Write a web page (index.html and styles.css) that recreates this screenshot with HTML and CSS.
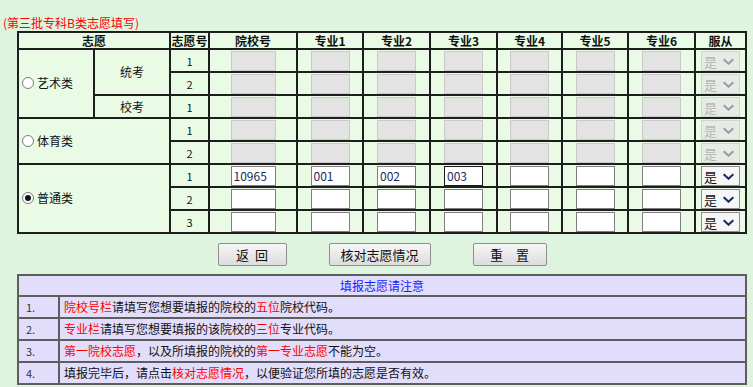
FILE: index.html
```html
<!DOCTYPE html>
<html lang="zh-CN">
<head>
	<meta charset="UTF-8">
	<title>志愿填写</title>
	<link rel="stylesheet" href="styles.css">
</head>
<body>
	<p class="title">(第三批专科B类志愿填写)</p>
	<table class="wish">
		<colgroup>
			<col style="width:76px"><col style="width:76px"><col style="width:39px"><col style="width:88px">
			<col style="width:66px"><col style="width:67px"><col style="width:67px"><col style="width:65px">
			<col style="width:66px"><col style="width:67px"><col style="width:51px">
		</colgroup>
		<thead>
			<tr>
				<th colspan="2">志愿</th>
				<th>志愿号</th>
				<th>院校号</th>
				<th>专业1</th>
				<th>专业2</th>
				<th>专业3</th>
				<th>专业4</th>
				<th>专业5</th>
				<th>专业6</th>
				<th>服从</th>
			</tr>
		</thead>
		<tbody>
			<tr>
				<td rowspan="3" class="kind"><label><input type="radio" name="kind" class="radio">艺术类</label></td>
				<td rowspan="2">统考</td>
				<td class="no">1</td>
				<td><input class="school" type="text" disabled></td>
				<td><input class="major" type="text" disabled></td>
				<td><input class="major" type="text" disabled></td>
				<td><input class="major" type="text" disabled></td>
				<td><input class="major" type="text" disabled></td>
				<td><input class="major" type="text" disabled></td>
				<td><input class="major" type="text" disabled></td>
				<td><div class="pick is-off"><select disabled><option>是</option><option>否</option></select><svg viewBox="0 0 14 8"><path d="M1.5 1.5 7 6.5 12.5 1.5"/></svg></div></td>
			</tr>
			<tr>
				<td class="no">2</td>
				<td><input class="school" type="text" disabled></td>
				<td><input class="major" type="text" disabled></td>
				<td><input class="major" type="text" disabled></td>
				<td><input class="major" type="text" disabled></td>
				<td><input class="major" type="text" disabled></td>
				<td><input class="major" type="text" disabled></td>
				<td><input class="major" type="text" disabled></td>
				<td><div class="pick is-off"><select disabled><option>是</option><option>否</option></select><svg viewBox="0 0 14 8"><path d="M1.5 1.5 7 6.5 12.5 1.5"/></svg></div></td>
			</tr>
			<tr>
				<td>校考</td>
				<td class="no">1</td>
				<td><input class="school" type="text" disabled></td>
				<td><input class="major" type="text" disabled></td>
				<td><input class="major" type="text" disabled></td>
				<td><input class="major" type="text" disabled></td>
				<td><input class="major" type="text" disabled></td>
				<td><input class="major" type="text" disabled></td>
				<td><input class="major" type="text" disabled></td>
				<td><div class="pick is-off"><select disabled><option>是</option><option>否</option></select><svg viewBox="0 0 14 8"><path d="M1.5 1.5 7 6.5 12.5 1.5"/></svg></div></td>
			</tr>
			<tr>
				<td rowspan="2" colspan="2" class="kind"><label><input type="radio" name="kind" class="radio">体育类</label></td>
				<td class="no">1</td>
				<td><input class="school" type="text" disabled></td>
				<td><input class="major" type="text" disabled></td>
				<td><input class="major" type="text" disabled></td>
				<td><input class="major" type="text" disabled></td>
				<td><input class="major" type="text" disabled></td>
				<td><input class="major" type="text" disabled></td>
				<td><input class="major" type="text" disabled></td>
				<td><div class="pick is-off"><select disabled><option>是</option><option>否</option></select><svg viewBox="0 0 14 8"><path d="M1.5 1.5 7 6.5 12.5 1.5"/></svg></div></td>
			</tr>
			<tr>
				<td class="no">2</td>
				<td><input class="school" type="text" disabled></td>
				<td><input class="major" type="text" disabled></td>
				<td><input class="major" type="text" disabled></td>
				<td><input class="major" type="text" disabled></td>
				<td><input class="major" type="text" disabled></td>
				<td><input class="major" type="text" disabled></td>
				<td><input class="major" type="text" disabled></td>
				<td><div class="pick is-off"><select disabled><option>是</option><option>否</option></select><svg viewBox="0 0 14 8"><path d="M1.5 1.5 7 6.5 12.5 1.5"/></svg></div></td>
			</tr>
			<tr>
				<td rowspan="3" colspan="2" class="kind"><label><input type="radio" name="kind" class="radio" checked>普通类</label></td>
				<td class="no">1</td>
				<td><input class="school" type="text" value="10965"></td>
				<td><input class="major" type="text" value="001"></td>
				<td><input class="major" type="text" value="002"></td>
				<td><input class="major is-focus" type="text" value="003"></td>
				<td><input class="major" type="text"></td>
				<td><input class="major" type="text"></td>
				<td><input class="major" type="text"></td>
				<td><div class="pick"><select><option>是</option><option>否</option></select><svg viewBox="0 0 14 8"><path d="M1.5 1.5 7 6.5 12.5 1.5"/></svg></div></td>
			</tr>
			<tr>
				<td class="no">2</td>
				<td><input class="school" type="text"></td>
				<td><input class="major" type="text"></td>
				<td><input class="major" type="text"></td>
				<td><input class="major" type="text"></td>
				<td><input class="major" type="text"></td>
				<td><input class="major" type="text"></td>
				<td><input class="major" type="text"></td>
				<td><div class="pick"><select><option>是</option><option>否</option></select><svg viewBox="0 0 14 8"><path d="M1.5 1.5 7 6.5 12.5 1.5"/></svg></div></td>
			</tr>
			<tr>
				<td class="no">3</td>
				<td><input class="school" type="text"></td>
				<td><input class="major" type="text"></td>
				<td><input class="major" type="text"></td>
				<td><input class="major" type="text"></td>
				<td><input class="major" type="text"></td>
				<td><input class="major" type="text"></td>
				<td><input class="major" type="text"></td>
				<td><div class="pick"><select><option>是</option><option>否</option></select><svg viewBox="0 0 14 8"><path d="M1.5 1.5 7 6.5 12.5 1.5"/></svg></div></td>
			</tr>
		</tbody>
	</table>
	<div class="btn-group">
		<button class="btn btn-back" type="button">返&nbsp;&nbsp;回</button>
		<button class="btn btn-check" type="button">核对志愿情况</button>
		<button class="btn btn-reset" type="button">重　置</button>
	</div>
	<table class="notice">
		<tr>
			<th colspan="2">填报志愿请注意</th>
		</tr>
		<tr>
			<td class="num">1.</td>
			<td><span class="red">院校号栏</span>请填写您想要填报的院校的<span class="red">五位</span>院校代码。</td>
		</tr>
		<tr>
			<td class="num">2.</td>
			<td><span class="red">专业栏</span>请填写您想要填报的该院校的<span class="red">三位</span>专业代码。</td>
		</tr>
		<tr>
			<td class="num">3.</td>
			<td><span class="red">第一院校志愿</span>，以及所填报的院校的<span class="red">第一专业志愿</span>不能为空。</td>
		</tr>
		<tr>
			<td class="num">4.</td>
			<td>填报完毕后，请点击<span class="red">核对志愿情况</span>，以便验证您所填的志愿是否有效。</td>
		</tr>
	</table>
</body>
</html>
```

FILE: styles.css
```css
html,body{
	margin:0;
	background: #def4de;
	font-family: "Noto Sans CJK SC", "Liberation Sans", sans-serif;
	font-size: 12px;
	color: #111;
}
.title{
	margin: 0;
	padding: 15px 0 0 3px;
	line-height: 16px;
	color: #f00;
}

.wish{
	margin-left: 17px;
	width: 730px;
	table-layout: fixed;
	border-collapse: collapse;
	border: 2px solid #1e1e1e;
}
.wish th,
.wish td{
	border: 2px solid #1e1e1e;
	background: #e9fbe5;
	padding: 0;
	text-align: center;
}
.wish th{
	height: 15px;
	line-height: 15px;
	font-weight: bold;
}
.wish td{
	height: 21px;
	line-height: 16px;
}
.wish td.no{
	font-size: 11px;
}
.wish td.kind{
	text-align: left;
	padding-left: 3px;
}
.wish td.kind label{
	display: inline-flex;
	align-items: center;
	gap: 3px;
}
.radio{
	appearance: none;
	margin: 0;
	width: 12px;
	height: 12px;
	border: 1px solid #7b7b7b;
	border-radius: 50%;
	background: #fff;
	box-sizing: border-box;
	position: relative;
}
.radio:checked::after{
	content: "";
	position: absolute;
	top: 2px;
	left: 2px;
	width: 6px;
	height: 6px;
	border-radius: 50%;
	background: #111;
}

.wish input[type=text]{
	box-sizing: border-box;
	height: 20px;
	margin: 0;
	padding: 0 2px;
	font: 12px "Noto Sans CJK SC", "Liberation Sans", sans-serif;
	color: #1c2a5a;
	background: #fff;
	border: 1px solid #7e7e7e;
	vertical-align: middle;
	outline: none;
}
.wish input.school{
	width: 45px;
}
.wish input.major{
	width: 39px;
}
.wish input:disabled{
	background: #e3e3e3;
	border-color: #c9c9c9;
}
.wish input.is-focus{
	border-color: #1a1a1a;
}

.pick{
	position: relative;
	display: inline-block;
	width: 39px;
	height: 20px;
	vertical-align: middle;
}
.pick select{
	appearance: none;
	box-sizing: border-box;
	width: 39px;
	height: 20px;
	margin: 0;
	padding: 0 0 0 2px;
	font: 13px "Noto Sans CJK SC", sans-serif;
	color: #111;
	background: #f6f6f6;
	border: 1px solid #8c8c8c;
	border-radius: 0;
}
.pick svg{
	position: absolute;
	top: 7px;
	right: 5px;
	width: 13px;
	height: 7px;
	fill: none;
	stroke: #1b2760;
	stroke-width: 2.4;
	pointer-events: none;
}
.pick.is-off select{
	background: #e6e6e6;
	border-color: #c6c6c6;
	color: #9a9a9a;
}
.pick.is-off svg{
	stroke: #9a9aa8;
}

.btn-group{
	display: flex;
	justify-content: center;
	gap: 42px;
	width: 730px;
	margin: 9px 0 0 17px;
}
.btn{
	height: 23px;
	padding: 0;
	font: 13px "Noto Sans CJK SC", sans-serif;
	color: #111;
	background: linear-gradient(#f7f7f7, #dcdcdc);
	border: 1px solid #8f8f8f;
	border-radius: 2px;
}
.btn-back{
	width: 69px;
}
.btn-check{
	width: 102px;
}
.btn-reset{
	width: 74px;
}

.notice{
	margin: 8px 0 0 17px;
	width: 730px;
	border-collapse: collapse;
	border: 2px solid #5e5e5e;
	background: #e1ddfb;
}
.notice th,
.notice td{
	border: 2px solid #5e5e5e;
	padding: 0 0 0 4px;
	height: 20px;
	line-height: 18px;
	text-align: left;
	font-weight: normal;
}
.notice th{
	height: 19px;
	text-align: center;
	color: #1a1aff;
	padding: 0;
}
.notice td.num{
	width: 32px;
	padding-left: 7px;
	font-size: 11px;
	color: #333;
}
.red{
	color: #f00;
}
```
